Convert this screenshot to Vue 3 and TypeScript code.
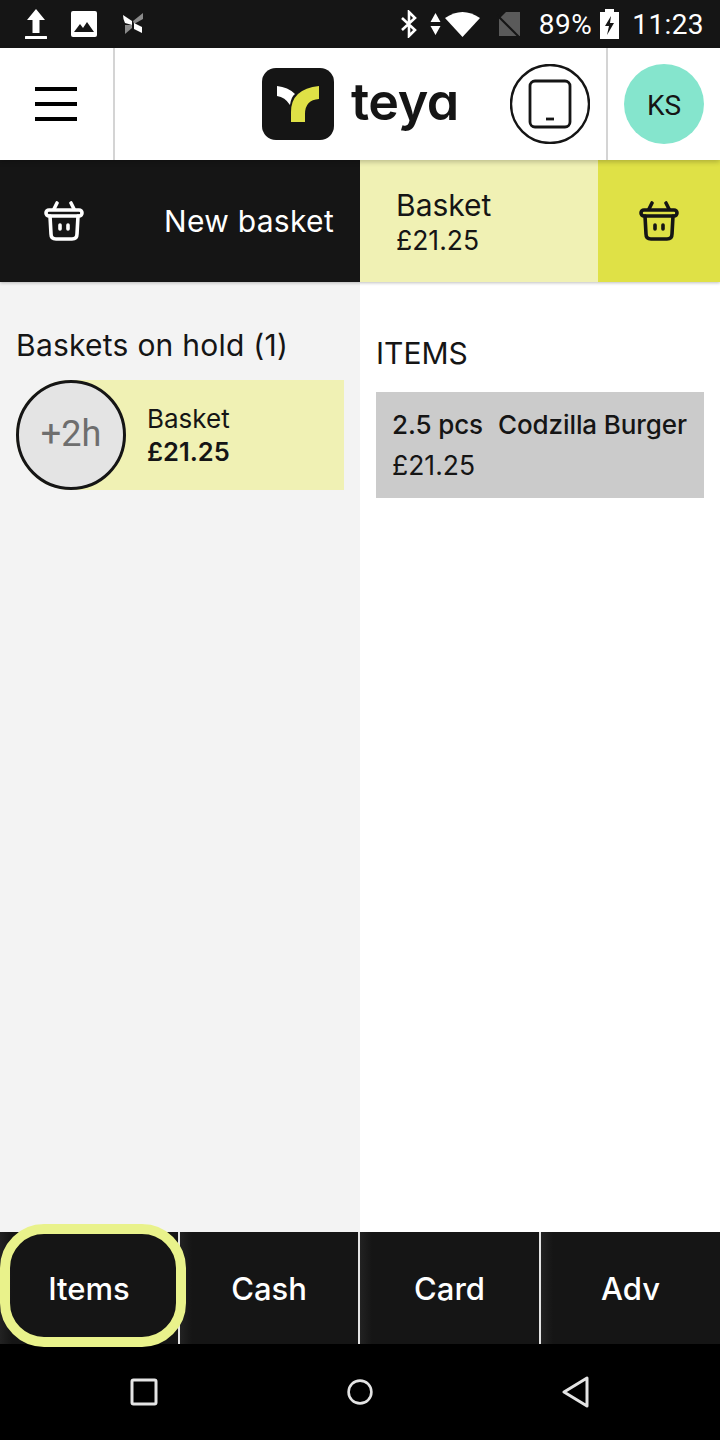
<script setup lang="ts">
interface PayTab {
  label: string;
  focused?: boolean;
}

const payTabs: PayTab[] = [
  { label: 'Items', focused: true },
  { label: 'Cash' },
  { label: 'Card' },
  { label: 'Adv' }
];
</script>

<template>
  <div class="screen">
    <div class="status">
      <div class="status__left">
        <svg width="28" height="32" viewBox="0 0 28 32" fill="#fff">
          <path d="M14 1 L23 12 H17.5 V25 H10.5 V12 H5 Z" />
          <rect x="3" y="28" width="22" height="3" rx="0.5" />
        </svg>
        <svg class="status__pic" width="26" height="26" viewBox="0 0 26 26">
          <rect width="26" height="26" rx="2" fill="#fff" />
          <path d="M3 21 L9 13 L12 17 L16 11 L23 21 Z" fill="#151515" />
        </svg>
        <svg class="status__fan" width="22" height="22" viewBox="0 0 22 22">
          <path d="M1 2 L10 8 L10 12 L3 10 Q1 6 1 2 Z" fill="#fff" />
          <path d="M21 0 V6 L12 11 L11 8 Z" fill="#8a8a8a" />
          <path d="M12 10 L20 14 L20 20 L12 16 Z" fill="#fff" />
          <path d="M3 12 L10 12 L10 15 L3 21 Z" fill="#8a8a8a" />
        </svg>
      </div>
      <div class="status__right">
        <svg width="18" height="28" viewBox="0 0 18 28" fill="none" stroke="#fff" stroke-width="2.6">
          <path d="M2 8 L15 20 L9 26 V2 L15 8 L2 20" />
        </svg>
        <svg class="status__updown" width="11" height="24" viewBox="0 0 11 24" fill="#fff">
          <path d="M5.5 1 L10.5 10 H0.5 Z M5.5 23 L10.5 14 H0.5 Z" />
        </svg>
        <svg class="status__wifi" width="35" height="26" viewBox="0 0 35 26" fill="#fff">
          <path d="M0 7 Q17.5 -5 35 7 L17.5 26 Z" />
        </svg>
        <svg class="status__sim" width="25" height="25" viewBox="0 0 25 25">
          <path d="M24 0 V24 H3 V7 L10 0 Z" fill="#5a5a5a" />
          <path d="M1 3 L23 25" stroke="#151515" stroke-width="2" />
        </svg>
        <span class="status__pct">89%</span>
        <svg class="status__batt" width="19" height="30" viewBox="0 0 19 30">
          <path d="M5 0 H14 V3 H19 V30 H0 V3 H5 Z" fill="#fff" />
          <path d="M11 7 L5 17 H9 L7 26 L14 14 H10 Z" fill="#151515" />
        </svg>
        <span class="status__time">11:23</span>
      </div>
    </div>

    <header class="topbar">
      <button class="topbar__menu" aria-label="Menu">
        <span /><span /><span />
      </button>
      <div class="brand">
        <svg class="brand__mark" width="72" height="72" viewBox="0 0 72 72">
          <rect width="72" height="72" rx="14" fill="#151515" />
          <path d="M15 18 Q26 19 33 26 Q29 29 28 37 Q23 29 15 28 Z" fill="#fff" />
          <path d="M29 54 V44 Q29 21 57 18 V31 Q43 32 43 46 V54 Z" fill="#dfe146" />
        </svg>
        <span class="brand__name">teya</span>
      </div>
      <div class="device">
        <svg width="80" height="80" viewBox="0 0 80 80" fill="none" stroke="#151515">
          <circle cx="40" cy="40" r="39" stroke-width="2.4" />
          <rect x="20" y="17" width="40" height="46" rx="5" stroke-width="2.8" />
          <path d="M36 55 H44" stroke-width="2.8" />
        </svg>
      </div>
      <div class="topbar__user">
        <div class="avatar">KS</div>
      </div>
    </header>

    <section class="baskets">
      <button class="baskets__new">
        <svg width="40" height="40" viewBox="0 0 40 40" fill="none" stroke="#fff" stroke-width="3.6" stroke-linecap="round" stroke-linejoin="round">
          <path d="M13 2 L10 8 M27 2 L30 8" />
          <rect x="2" y="9" width="36" height="6" rx="3" />
          <path d="M6 15 L7 33 Q7 38 12 38 H28 Q33 38 33 33 L34 15" />
          <path d="M16 24 V28 M24 24 V28" />
        </svg>
        <span>New basket</span>
      </button>
      <div class="baskets__current">
        <div class="baskets__info">
          <span class="baskets__name">Basket</span>
          <span class="baskets__sum">£21.25</span>
        </div>
        <div class="baskets__icon">
          <svg width="40" height="40" viewBox="0 0 40 40" fill="none" stroke="#151515" stroke-width="3.6" stroke-linecap="round" stroke-linejoin="round">
            <path d="M13 2 L10 8 M27 2 L30 8" />
            <rect x="2" y="9" width="36" height="6" rx="3" />
            <path d="M6 15 L7 33 Q7 38 12 38 H28 Q33 38 33 33 L34 15" />
            <path d="M16 24 V28 M24 24 V28" />
          </svg>
        </div>
      </div>
    </section>

    <main class="content">
      <div class="hold">
        <h2 class="hold__title">Baskets on hold (1)</h2>
        <div class="hold__card">
          <div class="hold__age">+2h</div>
          <div class="hold__text">
            <span class="hold__name">Basket</span>
            <span class="hold__sum">£21.25</span>
          </div>
        </div>
      </div>
      <div class="items">
        <h2 class="items__title">ITEMS</h2>
        <div class="item">
          <div class="item__head">
            <span>2.5 pcs</span>
            <span>Codzilla Burger</span>
          </div>
          <div class="item__price">£21.25</div>
        </div>
      </div>
    </main>

    <nav class="pay">
      <button v-for="tab in payTabs" :key="tab.label" class="pay__btn">
        {{ tab.label }}
        <span v-if="tab.focused" class="pay__ring" />
      </button>
    </nav>

    <div class="sysnav">
      <svg width="28" height="28" viewBox="0 0 28 28" fill="none" stroke="#e4e4e4" stroke-width="3" stroke-linejoin="round">
        <rect x="2" y="2" width="24" height="24" rx="1.5" />
      </svg>
      <svg width="28" height="28" viewBox="0 0 28 28" fill="none" stroke="#e4e4e4" stroke-width="2.6">
        <circle cx="14" cy="14" r="11.4" />
      </svg>
      <svg width="28" height="32" viewBox="0 0 28 32" fill="none" stroke="#e4e4e4" stroke-width="3" stroke-linejoin="round">
        <path d="M25 2 V30 L2 16 Z" />
      </svg>
    </div>
  </div>
</template>

<style>
body {
  margin: 0;
}
</style>

<style scoped>
.screen {
  width: 720px;
  height: 1440px;
  display: flex;
  flex-direction: column;
  overflow: hidden;
  background: #fff;
  color: #151515;
  font-family: Inter, Lato, sans-serif;
}

.status {
  height: 48px;
  flex: none;
  display: flex;
  justify-content: space-between;
  align-items: center;
  background: #151515;
  color: #fff;
  font-family: Roboto, sans-serif;
}

.status__left {
  display: flex;
  align-items: center;
  padding-left: 22px;
}

.status__pic {
  margin-left: 21px;
}

.status__fan {
  margin-left: 25px;
}

.status__right {
  display: flex;
  align-items: center;
  padding-right: 16px;
}

.status__updown {
  margin-left: 12px;
}

.status__wifi {
  margin-left: 4px;
}

.status__sim {
  margin-left: 16px;
}

.status__pct {
  margin-left: 18px;
  font-size: 28px;
  letter-spacing: 0.5px;
}

.status__batt {
  margin-left: 8px;
}

.status__time {
  margin-left: 13px;
  font-size: 28px;
  letter-spacing: 0.4px;
}

.topbar {
  height: 112px;
  flex: none;
  display: flex;
  align-items: center;
  background: #fff;
  position: relative;
  z-index: 2;
  box-shadow: 0 2px 5px rgba(0, 0, 0, 0.22);
}

.topbar__menu {
  width: 115px;
  height: 100%;
  flex: none;
  display: flex;
  flex-direction: column;
  justify-content: center;
  gap: 11px;
  padding: 0 0 0 35px;
  background: none;
  border: 0;
  border-right: 2px solid #d4d4d4;
}

.topbar__menu span {
  width: 42px;
  height: 4px;
  background: #000;
}

.brand {
  display: flex;
  align-items: center;
  margin-left: 147px;
}

.brand__name {
  width: 107px;
  margin-left: 17px;
  font-size: 52px;
  font-weight: 600;
  font-feature-settings: "cv11";
  letter-spacing: -0.5px;
  line-height: 72px;
  position: relative;
  top: -2px;
}

.device {
  margin-left: 52px;
  width: 80px;
  height: 80px;
  flex: none;
}

.topbar__user {
  margin-left: 16px;
  height: 100%;
  flex: 1;
  display: flex;
  align-items: center;
  padding-left: 16px;
  border-left: 2px solid #d4d4d4;
}

.avatar {
  width: 80px;
  height: 80px;
  border-radius: 50%;
  background: #85e5cd;
  display: flex;
  align-items: center;
  justify-content: center;
  padding-top: 2px;
  box-sizing: border-box;
  font-family: Roboto, sans-serif;
  font-size: 28px;
}

.baskets {
  height: 122px;
  flex: none;
  display: flex;
  box-shadow: 0 1px 3px rgba(0, 0, 0, 0.25);
  position: relative;
  z-index: 1;
}

.baskets__new {
  width: 360px;
  flex: none;
  display: flex;
  align-items: center;
  justify-content: space-between;
  padding: 0 26px 0 44px;
  background: #151515;
  color: #fff;
  border: 0;
  font: inherit;
  font-size: 30px;
  letter-spacing: 0.3px;
}

.baskets__current {
  flex: 1;
  display: flex;
  background: #f0f1b4;
}

.baskets__info {
  flex: 1;
  display: flex;
  flex-direction: column;
  justify-content: center;
  padding: 3px 0 0 36px;
}

.baskets__name {
  font-size: 30px;
  line-height: 35px;
}

.baskets__sum {
  font-size: 26.5px;
  line-height: 34px;
}

.baskets__icon {
  width: 122px;
  display: flex;
  align-items: center;
  justify-content: center;
  background: #dfe146;
}

.content {
  flex: 1;
  display: flex;
  min-height: 0;
}

.hold {
  width: 360px;
  flex: none;
  box-sizing: border-box;
  padding: 44px 16px 0;
  background: #f3f3f3;
}

.hold__title {
  margin: 0;
  font-size: 30px;
  font-weight: 400;
  letter-spacing: 0.25px;
  line-height: 38px;
}

.hold__card {
  margin-top: 16px;
  height: 110px;
  display: flex;
  align-items: center;
  background: #f0f1b4;
  border-radius: 55px 0 0 55px;
}

.hold__age {
  width: 110px;
  height: 110px;
  flex: none;
  box-sizing: border-box;
  display: flex;
  align-items: center;
  justify-content: center;
  padding-bottom: 2px;
  border: 3px solid #151515;
  border-radius: 50%;
  background: #e4e4e4;
  color: #6e6e6e;
  font-family: Roboto, sans-serif;
  font-size: 36px;
}

.hold__text {
  display: flex;
  flex-direction: column;
  margin-left: 21px;
  padding-top: 2px;
}

.hold__name {
  font-size: 26px;
  line-height: 32px;
}

.hold__sum {
  font-size: 25.5px;
  font-weight: 600;
  line-height: 34px;
}

.items {
  flex: 1;
  padding: 50px 16px 0;
}

.items__title {
  margin: 0;
  font-size: 30px;
  font-weight: 400;
  line-height: 42px;
}

.item {
  margin-top: 18px;
  height: 106px;
  box-sizing: border-box;
  padding: 15px 16px 0;
  background: #cbcbcb;
}

.item__head {
  display: flex;
  gap: 15px;
  white-space: nowrap;
  font-size: 26px;
  font-weight: 500;
  letter-spacing: -0.1px;
  line-height: 36px;
}

.item__price {
  margin-top: 4px;
  font-size: 26.5px;
  line-height: 36px;
}

.pay {
  height: 112px;
  flex: none;
  display: grid;
  grid-template-columns: 180px 180px 181px 1fr;
  background: #151515;
}

.pay__btn {
  position: relative;
  background: linear-gradient(90deg, #222 0, #151515 12px);
  color: #fff;
  border: 0;
  border-right: 2px solid #e4e4e4;
  font: inherit;
  font-size: 31px;
  font-weight: 500;
}

.pay__btn:last-child {
  border-right: 0;
}

.pay__ring {
  position: absolute;
  z-index: 1;
  left: 0;
  top: -8px;
  width: 186px;
  height: 123px;
  box-sizing: border-box;
  border: 10px solid #e9f28b;
  border-radius: 44px;
}

.sysnav {
  height: 96px;
  flex: none;
  display: flex;
  align-items: center;
  justify-content: space-between;
  padding: 0 130px;
  background: #000;
}
</style>
